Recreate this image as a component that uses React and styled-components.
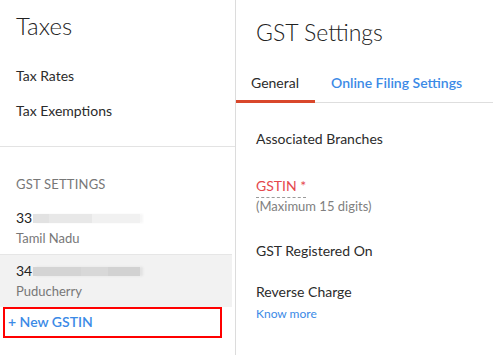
import React from "react";
import styled, { createGlobalStyle } from "styled-components";

const Global = createGlobalStyle`
  html, body { margin: 0; padding: 0; background: #fff; }
  body { font-family: Lato, "Open Sans", sans-serif; color: #2b2b2b; }
  * { box-sizing: border-box; }
`;

const Page = styled.div`
  display: flex;
  width: 493px;
  height: 355px;
  overflow: hidden;
  background: #fff;
`;

const Sidebar = styled.aside`
  width: 236px;
  flex: none;
  border-right: 1px solid #dcdcdc;
  display: flex;
  flex-direction: column;
`;

const SideTop = styled.div`
  padding: 12px 0 18px;
  border-bottom: 1px solid #e3e3e3;
`;

const PageTitle = styled.h1`
  margin: 0;
  padding-left: ${(p) => p.$indent}px;
  font-size: ${(p) => p.$size}px;
  line-height: 28px;
  font-weight: 300;
  color: #222;
`;

const NavList = styled.nav`
  margin-top: 18px;
  display: flex;
  flex-direction: column;
`;

const NavItem = styled.a`
  display: block;
  padding: 8px 16px 7px;
  font-size: 14px;
  line-height: 20px;
  color: #2b2b2b;
`;

const SectionHead = styled.div`
  margin: 28px 0 8px;
  padding-left: 16px;
  font-size: 13px;
  line-height: 18px;
  color: #777;
  letter-spacing: 0.2px;
`;

const GstinRow = styled.div`
  margin-right: 3px;
  padding: 7px 16px 7px;
  border-top: 1px solid ${(p) => (p.$active ? "#e6e6e6" : "transparent")};
  background: ${(p) => (p.$active ? "#f2f2f2" : "transparent")};
`;

const GstinNumber = styled.div`
  display: flex;
  align-items: center;
  font-size: 14px;
  line-height: 18px;
  color: #222;
`;

const Blur = styled.span`
  display: inline-block;
  width: 107px;
  height: 9px;
  margin-left: 1px;
  background: ${(p) =>
    p.$dark
      ? "linear-gradient(90deg, #d4d4d4 0 45%, #d8d8d8 45% 70%, #d2d2d2 70% 100%)"
      : "linear-gradient(90deg, #e2e2e2 0 15%, #e8e8e8 15% 55%, #f1f1f1 55% 100%)"};
  box-shadow: 3px 0 2px ${(p) => (p.$dark ? "#e2e2e2" : "#f6f6f6")};
`;

const StateName = styled.div`
  margin-top: 2px;
  font-size: 13px;
  line-height: 18px;
  color: #777;
`;

const NewLink = styled.a`
  display: block;
  width: 219px;
  margin-left: 3px;
  padding: 4px 3px 5px;
  border: 2px solid #f00;
  font-size: 14px;
  line-height: 18px;
  font-weight: 600;
  color: #3b8ae6;
`;

const Main = styled.main`
  flex: 1;
  display: flex;
  flex-direction: column;
  padding-top: 18px;
`;

const TabBar = styled.div`
  display: flex;
  margin-top: 27px;
  border-bottom: 1px solid #dedede;
`;

const Tab = styled.a`
  padding: 0 ${(p) => (p.$active ? 15 : 16)}px 7px;
  margin-bottom: -1px;
  font-size: 14px;
  line-height: 20px;
  font-weight: ${(p) => (p.$active ? 400 : 600)};
  color: ${(p) => (p.$active ? "#2b2b2b" : "#3b8ae6")};
  border-bottom: 3px solid ${(p) => (p.$active ? "#d9472b" : "transparent")};
  width: ${(p) => (p.$active ? "79px" : "auto")};
`;

const Fields = styled.div`
  padding-left: 20px;
  display: flex;
  flex-direction: column;
`;

const FieldLabel = styled.div`
  margin-top: ${(p) => p.$gap}px;
  font-size: 14px;
  line-height: 20px;
  color: ${(p) => (p.$required ? "#e5484d" : "#2b2b2b")};
`;

const Dashed = styled.span`
  padding-bottom: 3px;
  border-bottom: 1px dashed #9a9a9a;
`;

const Hint = styled.div`
  margin-top: 1px;
  font-size: 13px;
  line-height: 18px;
  color: #808080;
`;

const SmallLink = styled.a`
  margin-top: 4px;
  font-size: 12px;
  line-height: 16px;
  color: #3b8ae6;
`;

export default function App() {
  return (
    <Page>
      <Global />
      <Sidebar>
        <SideTop>
          <PageTitle $indent={16} $size={24}>Taxes</PageTitle>
          <NavList>
            <NavItem>Tax Rates</NavItem>
            <NavItem>Tax Exemptions</NavItem>
          </NavList>
        </SideTop>
        <SectionHead>GST SETTINGS</SectionHead>
        <GstinRow>
          <GstinNumber>33<Blur /></GstinNumber>
          <StateName>Tamil Nadu</StateName>
        </GstinRow>
        <GstinRow $active>
          <GstinNumber>34<Blur $dark /></GstinNumber>
          <StateName>Puducherry</StateName>
        </GstinRow>
        <NewLink>+ New GSTIN</NewLink>
      </Sidebar>
      <Main>
        <PageTitle $indent={20} $size={23}>GST Settings</PageTitle>
        <TabBar>
          <Tab $active>General</Tab>
          <Tab>Online Filing Settings</Tab>
        </TabBar>
        <Fields>
          <FieldLabel $gap={26}>Associated Branches</FieldLabel>
          <FieldLabel $gap={27} $required><Dashed>GSTIN *</Dashed></FieldLabel>
          <Hint>(Maximum 15 digits)</Hint>
          <FieldLabel $gap={26}>GST Registered On</FieldLabel>
          <FieldLabel $gap={21}>Reverse Charge</FieldLabel>
          <SmallLink>Know more</SmallLink>
        </Fields>
      </Main>
    </Page>
  );
}
